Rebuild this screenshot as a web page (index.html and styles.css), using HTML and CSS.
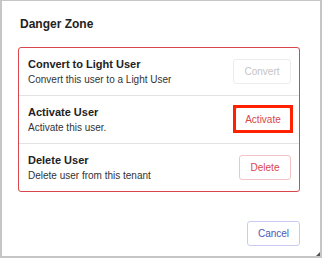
FILE: index.html
```html
<!DOCTYPE html>
<html>
<head>
<meta charset="utf-8">
<link rel="stylesheet" href="styles.css">
</head>
<body>
<div class="modal">
  <h2 class="modal-title">Danger Zone</h2>
  <div class="danger-box">
    <div class="row">
      <div class="row-text">
        <div class="row-title">Convert to Light User</div>
        <div class="row-sub">Convert this user to a Light User</div>
      </div>
      <button class="btn btn-disabled" disabled>Convert</button>
    </div>
    <div class="row">
      <div class="row-text">
        <div class="row-title">Activate User</div>
        <div class="row-sub">Activate this user.</div>
      </div>
      <button class="btn btn-danger btn-highlight">Activate</button>
    </div>
    <div class="row">
      <div class="row-text">
        <div class="row-title">Delete User</div>
        <div class="row-sub">Delete user from this tenant</div>
      </div>
      <button class="btn btn-danger">Delete</button>
    </div>
  </div>
  <div class="footer">
    <button class="btn btn-cancel">Cancel</button>
  </div>
  <div class="grip"></div>
</div>
</body>
</html>
```
FILE: styles.css
```css
* { box-sizing: border-box; }
html, body { margin: 0; padding: 0; background: #fff; }
body { font-family: "Liberation Sans", Arial, sans-serif; color: #222; }
.modal {
  position: relative;
  width: 322px;
  height: 258px;
  border: 2px solid #c6c6c6;
  border-top-width: 1px;
  padding: 16px 20px 0 16px;
  display: flex;
  flex-direction: column;
}
.modal-title {
  margin: 0;
  font-size: 12px;
  line-height: 15px;
  font-weight: bold;
  color: #222;
  padding-left: 2px;
}
.danger-box {
  margin-top: 15px;
  border: 1px solid #d9474c;
  border-radius: 3px;
  width: 282px;
}
.row {
  height: 47px;
  display: flex;
  align-items: center;
  justify-content: space-between;
  padding: 0 8px 0 9px;
}
.row + .row { border-top: 1px solid #e3e3e3; height: 48px; }
.row-title { font-size: 11px; line-height: 14px; font-weight: bold; color: #222; }
.row-sub { font-size: 10px; line-height: 14px; margin-top: 2px; color: #333; }
.btn {
  position: relative;
  font-family: "Liberation Sans", Arial, sans-serif;
  font-size: 10px;
  height: 25px;
  padding: 0;
  background: #fff;
  border-radius: 3px;
  border: 1px solid #ddd;
  text-align: center;
}
.btn-disabled { color: #c4c4c4; border-color: #ececec; width: 58px; }
.btn-danger { color: #d9474c; border-color: #f3c3c5; width: 52px; }
.btn-highlight { width: 56px; }
.btn-highlight::after {
  content: "";
  position: absolute;
  top: -3px;
  left: -3px;
  right: -3px;
  bottom: -2px;
  border: 3px solid #ff2200;
}
.footer {
  margin-top: auto;
  margin-bottom: 10px;
  display: flex;
  justify-content: flex-end;
  width: 282px;
  padding-left: 2px;
}
.btn-cancel { color: #4b56b8; border-color: #c9ccf2; width: 53px; height: 25px; }
.grip {
  position: absolute;
  right: 0;
  bottom: 0;
  width: 0;
  height: 0;
  border-left: 4px solid transparent;
  border-bottom: 4px solid #555;
}
```
